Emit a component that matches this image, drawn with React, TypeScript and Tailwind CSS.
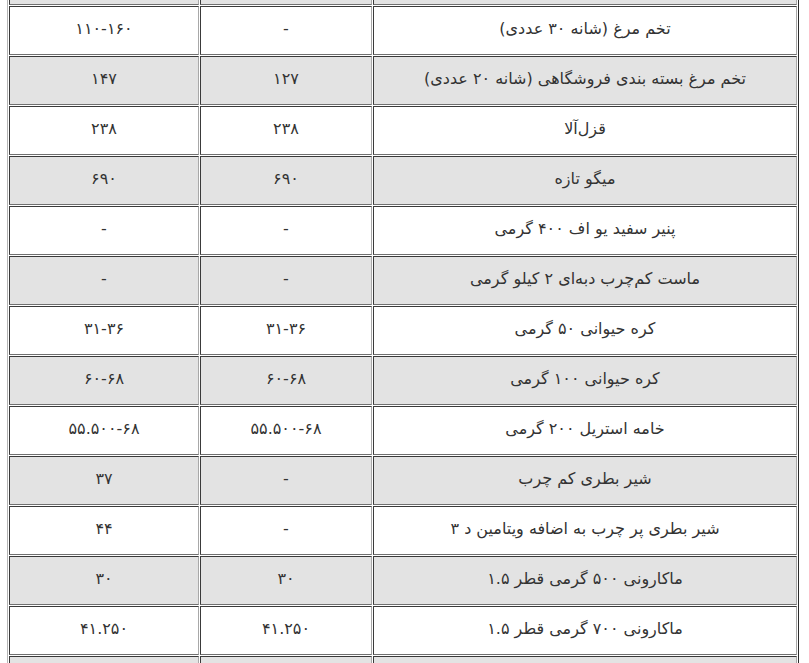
import React from "react";

const ROWS: [string, string, string][] = [
  ["", "", ""],
  ["تخم مرغ (شانه ۳۰ عددی)", "-", "۱۱۰-۱۶۰"],
  ["تخم مرغ بسته بندی فروشگاهی (شانه ۲۰ عددی)", "۱۲۷", "۱۴۷"],
  ["قزل‌آلا", "۲۳۸", "۲۳۸"],
  ["میگو تازه", "۶۹۰", "۶۹۰"],
  ["پنیر سفید یو اف ۴۰۰ گرمی", "-", "-"],
  ["ماست کم‌چرب دبه‌ای ۲ کیلو گرمی", "-", "-"],
  ["کره حیوانی ۵۰ گرمی", "۳۱-۳۶", "۳۱-۳۶"],
  ["کره حیوانی ۱۰۰ گرمی", "۶۰-۶۸", "۶۰-۶۸"],
  ["خامه استریل ۲۰۰ گرمی", "۵۵.۵۰۰-۶۸", "۵۵.۵۰۰-۶۸"],
  ["شیر بطری کم چرب", "-", "۳۷"],
  ["شیر بطری پر چرب به اضافه ویتامین د ۳", "-", "۴۴"],
  ["ماکارونی ۵۰۰ گرمی قطر ۱.۵", "۳۰", "۳۰"],
  ["ماکارونی ۷۰۰ گرمی قطر ۱.۵", "۴۱.۲۵۰", "۴۱.۲۵۰"],
  ["", "", ""],
];

const cell =
  "h-[49px] p-0 pb-[4px] align-middle text-center border border-t-[#3a3a3a] border-l-[#3a3a3a] border-b-[#707070] border-r-[#a8a8a8]";

export default function App() {
  return (
    <div className="h-[663px] w-[809px] overflow-hidden bg-white">
      <div className="pl-[7px] mt-[-46px]">
        <table
          dir="rtl"
          className="w-[792px] table-fixed border-separate border-spacing-[1px] border border-l-[#b4b4b4] border-t-[#b4b4b4] border-r-[#2a2a2a] border-b-[#2a2a2a] text-[16px] text-[#333] font-['DejaVu_Sans',sans-serif]"
        >
          <colgroup>
            <col className="w-[424px]" />
            <col className="w-[172px]" />
            <col className="w-[190px]" />
          </colgroup>
          <tbody>
            {ROWS.map((r, i) => (
              <tr key={i} className={i % 2 === 0 ? "bg-[#e3e3e3]" : "bg-white"}>
                <td className={cell}>{r[0]}</td>
                <td className={cell}>{r[1]}</td>
                <td className={cell}>{r[2]}</td>
              </tr>
            ))}
          </tbody>
        </table>
      </div>
    </div>
  );
}
